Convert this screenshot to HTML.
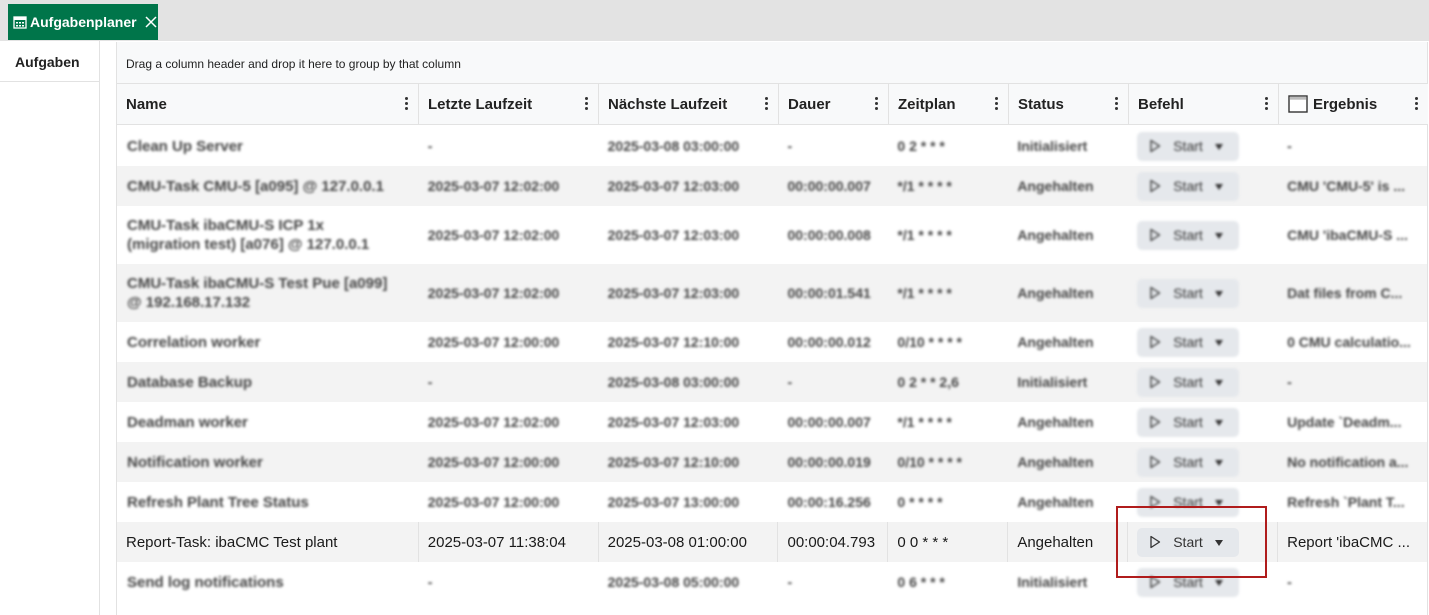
<!DOCTYPE html>
<html><head><meta charset="utf-8"><style>
*{box-sizing:border-box;margin:0;padding:0}
body{width:1429px;height:615px;overflow:hidden;background:#fff;font-family:"Liberation Sans",sans-serif;color:#222;position:relative}
.top{position:absolute;left:0;top:0;width:1429px;height:41px;background:#e3e3e3}
.tab{position:absolute;left:8px;top:4px;width:150px;height:36px;background:#00754a;color:#fff;font-size:14px;font-weight:bold;display:flex;align-items:center;padding-left:5px;gap:3px}
.left{position:absolute;left:0;top:41px;width:100px;height:574px;border-right:1px solid #e2e2e2}
.left .h{height:41px;border-bottom:1px solid #e2e2e2;font-weight:bold;font-size:14px;padding:13px 0 0 15px}
.grid{position:absolute;left:116px;top:42px;width:1312px;height:573px;border-left:1px solid #e2e2e2;border-right:1px solid #e2e2e2}
.grp{height:42px;background:#f8f9fa;border-bottom:1px solid #e2e2e2;font-size:12px;padding:15px 0 0 9px}
.row{position:absolute;left:0;width:1311px;display:flex}
.row.alt{background:#f3f3f3}
.c{position:relative;height:100%;padding:0 9px;display:flex;align-items:center;font-size:14px;line-height:19px;border-left:1px solid transparent}
.hdr{top:42px;height:41px;background:#f8f9fa;border-bottom:1px solid #e2e2e2;font-weight:bold}
.hdr .c{border-left:1px solid #e2e2e2;font-size:15px}
.hdr .c:first-child{border-left:none}
.dots{position:absolute;right:10px;top:13px;width:3px}
.dots i{display:block;width:3px;height:3px;background:#333;border-radius:50%;margin-bottom:2px}
.bl{filter:blur(1.4px);color:#444;font-weight:bold}
.btn{width:102px;height:29px;background:#e5e8ec;border-radius:5px;display:flex;align-items:center;padding-left:12px;font-size:14px;color:#333;position:relative;font-weight:normal}
.btn .ar{position:absolute;right:16px;top:12px;border-left:4px solid transparent;border-right:4px solid transparent;border-top:6px solid #333}
.sep .c{border-left:1px solid #e2e2e2}
.sep .c:first-child{border-left:none}
</style></head><body>
<div class="top"></div>
<div class="tab"><svg width="14" height="14" viewBox="0 0 14 14"><rect x="1" y="2" width="12" height="11" fill="none" stroke="#fff" stroke-width="1.3"/><rect x="1" y="2" width="12" height="3" fill="#fff"/><g fill="#fff"><rect x="3" y="7" width="2" height="1.5"/><rect x="6" y="7" width="2" height="1.5"/><rect x="9" y="7" width="2" height="1.5"/><rect x="3" y="10" width="2" height="1.5"/><rect x="6" y="10" width="2" height="1.5"/><rect x="9" y="10" width="2" height="1.5"/></g></svg>Aufgabenplaner<svg style="margin-left:5px" width="12" height="12" viewBox="0 0 12 12"><path d="M1 1L11 11M11 1L1 11" stroke="#fff" stroke-width="1.5"/></svg></div>
<div class="left"><div class="h">Aufgaben</div></div>
<div class="grid">
<div class="grp">Drag a column header and drop it here to group by that column</div>
<div class="row hdr">
<div class="c" style="width:301px">Name<span class="dots"><i></i><i></i><i></i></span></div>
<div class="c" style="width:180px">Letzte Laufzeit<span class="dots"><i></i><i></i><i></i></span></div>
<div class="c" style="width:180px">Nächste Laufzeit<span class="dots"><i></i><i></i><i></i></span></div>
<div class="c" style="width:110px">Dauer<span class="dots"><i></i><i></i><i></i></span></div>
<div class="c" style="width:120px">Zeitplan<span class="dots"><i></i><i></i><i></i></span></div>
<div class="c" style="width:120px">Status<span class="dots"><i></i><i></i><i></i></span></div>
<div class="c" style="width:150px">Befehl<span class="dots"><i></i><i></i><i></i></span></div>
<div class="c" style="width:150px"><svg width="20" height="18" viewBox="0 0 20 18" style="margin-right:5px"><rect x="1" y="1" width="18" height="16" fill="#fff" stroke="#333" stroke-width="1.4"/><rect x="1.7" y="1.7" width="16.6" height="3" fill="#bbb"/></svg>Ergebnis<span class="dots"><i></i><i></i><i></i></span></div>
</div>
</div>
<div id="rows"></div>
<div style="position:absolute;left:1116px;top:506px;width:151px;height:72px;border:2px solid #b01c1c"></div>
<script>
var data=[
["Clean Up Server","-","2025-03-08 03:00:00","-","0 2 * * *","Initialisiert","-",40],
["CMU-Task CMU-5 [a095] @ 127.0.0.1","2025-03-07 12:02:00","2025-03-07 12:03:00","00:00:00.007","*/1 * * * *","Angehalten","CMU 'CMU-5' is ...",40],
["CMU-Task ibaCMU-S ICP 1x (migration test) [a076] @ 127.0.0.1","2025-03-07 12:02:00","2025-03-07 12:03:00","00:00:00.008","*/1 * * * *","Angehalten","CMU 'ibaCMU-S ...",58],
["CMU-Task ibaCMU-S Test Pue [a099] @ 192.168.17.132","2025-03-07 12:02:00","2025-03-07 12:03:00","00:00:01.541","*/1 * * * *","Angehalten","Dat files from C...",58],
["Correlation worker","2025-03-07 12:00:00","2025-03-07 12:10:00","00:00:00.012","0/10 * * * *","Angehalten","0 CMU calculatio...",40],
["Database Backup","-","2025-03-08 03:00:00","-","0 2 * * 2,6","Initialisiert","-",40],
["Deadman worker","2025-03-07 12:02:00","2025-03-07 12:03:00","00:00:00.007","*/1 * * * *","Angehalten","Update `Deadm...",40],
["Notification worker","2025-03-07 12:00:00","2025-03-07 12:10:00","00:00:00.019","0/10 * * * *","Angehalten","No notification a...",40],
["Refresh Plant Tree Status","2025-03-07 12:00:00","2025-03-07 13:00:00","00:00:16.256","0 * * * *","Angehalten","Refresh `Plant T...",40],
["Report-Task: ibaCMC Test plant","2025-03-07 11:38:04","2025-03-08 01:00:00","00:00:04.793","0 0 * * *","Angehalten","Report 'ibaCMC ...",40],
["Send log notifications","-","2025-03-08 05:00:00","-","0 6 * * *","Initialisiert","-",40]];
var w=[301,180,180,110,120,120,150,150],y=126,h="";
data.forEach(function(r,i){
 var sharp=i==9, cls="row"+(i%2?" alt":"")+(sharp?" sep":"");
 h+='<div class="'+cls+'" style="left:117px;top:'+y+'px;height:'+r[7]+'px;width:1310px">';
 var cells=[r[0],r[1],r[2],r[3],r[4],r[5],null,r[6]];
 cells.forEach(function(t,j){
  var inner;
  if(j==6) inner='<div class="btn'+(sharp?'':' bl')+'"><svg width="12" height="14" viewBox="0 0 12 14" style="margin-right:12px"><path d="M2 1.5L10.5 7L2 12.5Z" fill="none" stroke="#333" stroke-width="1.3" stroke-linejoin="round"/></svg>Start<span class="ar"></span></div>';
  else inner='<span'+(sharp?'':' class="bl"')+'>'+t+'</span>';
  h+='<div class="c" style="width:'+w[j]+'px;'+(sharp?'color:#1a1a1a;font-size:15px;':'')+(j==0?'padding-right:30px;font-size:15px;':'')+'">'+inner+'</div>';
 });
 h+='</div>'; y+=r[7];
});
document.getElementById('rows').innerHTML=h;
</script>
</body></html>
